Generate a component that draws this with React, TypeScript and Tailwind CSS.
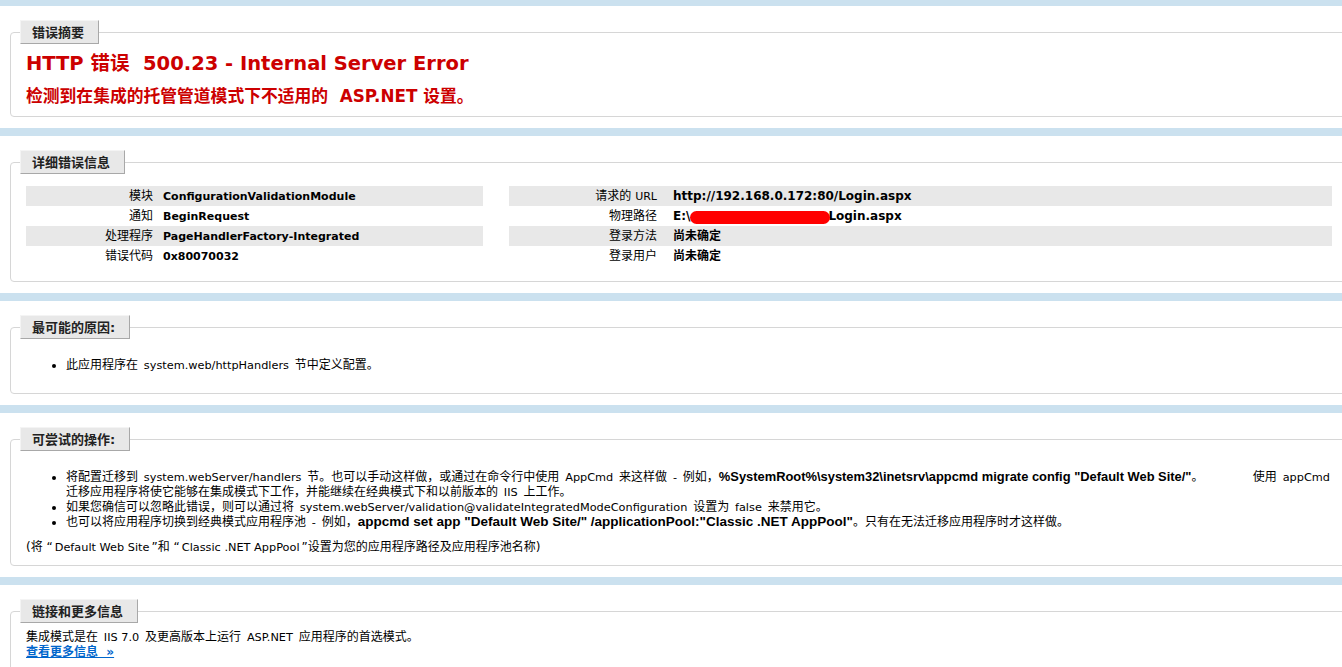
import React from "react";

const FONT = "font-['DejaVu_Sans','Noto_Sans_CJK_SC',sans-serif]";

function E({ children }: { children: React.ReactNode }) {
  return <span className="px-[2px] text-[11.3px]">{children}</span>;
}

function B({ children, size }: { children: React.ReactNode; size: string }) {
  return (
    <span className={"font-['Liberation_Sans','Noto_Sans_CJK_SC',sans-serif] font-bold leading-[12px] " + size}>
      {children}
    </span>
  );
}

function Legend({ children }: { children: React.ReactNode }) {
  return (
    <div className="inline-flex h-[24px] items-center border border-t-[#f4f4f4] border-l-[#f4f4f4] border-r-[#a8a8a8] border-b-[#a8a8a8] bg-[#e8e8e8] pl-[11px] pr-[14px] text-[13px] font-bold text-[#222]">
      {children}
    </div>
  );
}

function Section({
  title,
  children,
  grow,
}: {
  title: string;
  children: React.ReactNode;
  grow?: boolean;
}) {
  return (
    <div className={"bg-white pl-[10px] pt-[14px] pb-[11px]" + (grow ? " flex-1" : "")}>
      <div className="mt-[12px] mr-[-6px] rounded-[4px] border border-[#d6d6d6] px-[15px] pb-[10px]">
        <div className="-mt-[13px] ml-[-6px]">
          <Legend>{title}</Legend>
        </div>
        {children}
      </div>
    </div>
  );
}

function Row({
  label,
  value,
  alt,
  labelW,
  right,
}: {
  label: React.ReactNode;
  value: React.ReactNode;
  alt?: boolean;
  labelW: string;
  right?: boolean;
}) {
  return (
    <div className={"flex h-[20px] items-center" + (alt ? " bg-[#e8e8e8]" : "")}>
      <div className={labelW + " shrink-0 text-right"}>{label}</div>
      <div className={"font-bold " + (right ? "text-[12px]" : "text-[11px]")}>{value}</div>
    </div>
  );
}

export default function App() {
  return (
    <div
      className={
        FONT +
        " flex min-h-screen w-full flex-col gap-[8px] overflow-hidden bg-[#cbe1ef] pt-[6px] text-[12px] leading-[15px] text-black"
      }
    >
      <Section title="错误摘要">
        <div className="mt-[8px] whitespace-nowrap text-[19.5px] font-bold leading-[24px] text-[#cc0000]">
          HTTP 错误&nbsp; 500.23 - Internal Server Error
        </div>
        <div className="mt-[10px] whitespace-nowrap text-[16.8px] font-bold leading-[20px] text-[#cc0000]">
          检测到在集成的托管管道模式下不适用的&nbsp; ASP.NET 设置。
        </div>
      </Section>

      <Section title="详细错误信息">
        <div className="mb-[5px] mt-[12px] flex gap-[26px]">
          <div className="w-[457px] shrink-0">
            <Row labelW="w-[137px] pr-[10px]" alt label="模块" value="ConfigurationValidationModule" />
            <Row labelW="w-[137px] pr-[10px]" label="通知" value="BeginRequest" />
            <Row labelW="w-[137px] pr-[10px]" alt label="处理程序" value="PageHandlerFactory-Integrated" />
            <Row labelW="w-[137px] pr-[10px]" label="错误代码" value="0x80070032" />
          </div>
          <div className="w-[823px] shrink-0">
            <Row
              right
              labelW="w-[164px] pr-[16px]"
              alt
              label={
                <>
                  请求的 <span className="text-[11px]">URL</span>
                </>
              }
              value="http://192.168.0.172:80/Login.aspx"
            />
            <Row
              right
              labelW="w-[164px] pr-[16px]"
              label="物理路径"
              value={
                <span className="relative inline-block">
                  E:\
                  <span className="inline-block w-[138px]" />
                  Login.aspx
                  <span className="absolute left-[17px] top-[2px] h-[13px] w-[140px] rounded-full bg-[#ff0000]" />
                </span>
              }
            />
            <Row right labelW="w-[164px] pr-[16px]" alt label="登录方法" value="尚未确定" />
            <Row right labelW="w-[164px] pr-[16px]" label="登录用户" value="尚未确定" />
          </div>
        </div>
      </Section>

      <Section title="最可能的原因:">
        <ul className="mb-[10px] ml-[40px] mt-[19px] list-disc">
          <li className="whitespace-nowrap">
            此应用程序在 <E>system.web/httpHandlers</E> 节中定义配置。
          </li>
        </ul>
      </Section>

      <Section title="可尝试的操作:">
        <ul className="mb-[10px] ml-[40px] mt-[19px] list-disc">
          <li>
            <span className="flex h-[15px] justify-between whitespace-nowrap">
              <span>
                将配置迁移到 <E>system.webServer/handlers</E> 节。也可以手动这样做，或通过在命令行中使用 <E>AppCmd</E> 来这样做 <E>-</E> 例如，
                <B size="text-[12.9px]">{'%SystemRoot%\\system32\\inetsrv\\appcmd migrate config "Default Web Site/"'}</B>。
              </span>
              <span>
                使用 <E>appCmd</E>
              </span>
            </span>
            <span className="block h-[15px] whitespace-nowrap">
              迁移应用程序将使它能够在集成模式下工作，并能继续在经典模式下和以前版本的 <E>IIS</E> 上工作。
            </span>
          </li>
          <li className="h-[15px] whitespace-nowrap">
            如果您确信可以忽略此错误，则可以通过将 <E>system.webServer/validation@validateIntegratedModeConfiguration</E> 设置为 <E>false</E> 来禁用它。
          </li>
          <li className="h-[15px] whitespace-nowrap">
            也可以将应用程序切换到经典模式应用程序池 <E>-</E> 例如，
            <B size="text-[13.5px]">{'appcmd set app "Default Web Site/" /applicationPool:"Classic .NET AppPool"'}</B>。只有在无法迁移应用程序时才这样做。
          </li>
        </ul>
        <div className="h-[15px] whitespace-nowrap">
          (将 “<E>Default Web Site</E>”和 “<E>Classic .NET AppPool</E>”设置为您的应用程序路径及应用程序池名称)
        </div>
      </Section>

      <Section title="链接和更多信息" grow>
        <div className="mt-[7px] whitespace-nowrap">
          集成模式是在 <E>IIS 7.0</E> 及更高版本上运行 <E>ASP.NET</E> 应用程序的首选模式。
        </div>
        <a href="#" className="font-bold text-[#0066cc] underline">
          查看更多信息&nbsp; »
        </a>
      </Section>
    </div>
  );
}
